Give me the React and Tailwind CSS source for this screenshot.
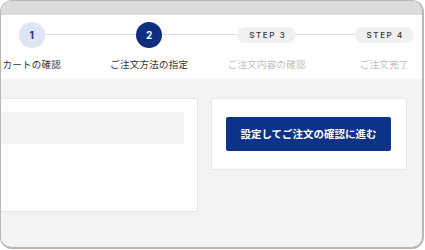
import React from "react"

const steps = [
  { key: 1, label: "カートの確認", state: "done" },
  { key: 2, label: "ご注文方法の指定", state: "current" },
  { key: 3, label: "ご注文内容の確認", state: "todo" },
  { key: 4, label: "ご注文完了", state: "todo" },
]

const jp = { fontFamily: '"Noto Sans CJK JP", "Noto Sans", sans-serif' }
const latin = { fontFamily: 'Inter, "Noto Sans", sans-serif' }

function StepMark({ step }) {
  if (step.state === "done") {
    return (
      <div className="relative z-10 w-[26px] h-[26px] rounded-full bg-[#dfe5f5] text-[#12307f] flex items-center justify-center text-[10px] font-bold" style={latin}>
        {step.key}
      </div>
    )
  }
  if (step.state === "current") {
    return (
      <div className="relative z-10 w-[26px] h-[26px] rounded-full bg-[#0f2e80] text-white flex items-center justify-center text-[10px] font-bold" style={latin}>
        {step.key}
      </div>
    )
  }
  return (
    <div className="relative z-10 h-[26px] flex items-center">
      <div className="h-[16px] w-[59px] rounded-full bg-[#f0f0f0] text-[#333] flex items-center justify-center text-[8px] font-medium tracking-[0.2em] pl-[2px]" style={latin}>
        STEP {step.key}
      </div>
    </div>
  )
}

function Step({ step, last }) {
  const muted = step.state === "todo"
  return (
    <div className="relative w-[117.5px] shrink-0 flex flex-col items-center pt-[7px]">
      {!last && <div className="absolute top-[19px] left-1/2 w-full h-px bg-[#dedede]" />}
      <StepMark step={step} />
      <div
        className={`mt-[10px] text-[9.5px] leading-[12px] tracking-[0.03em] whitespace-nowrap ${muted ? "text-[#bdbdbd]" : "text-[#333]"}`}
        style={jp}
      >
        {step.label}
      </div>
    </div>
  )
}

export default function App() {
  return (
    <div className="w-[425px] h-[250px] bg-white">
      <div className="w-[424px] h-[249px] rounded-[12px] border border-[#bdb6ae] border-b-2 border-r-2 overflow-hidden flex flex-col bg-[#f3f3f3]">
        <div className="h-[14px] bg-[#dcdcdc] shrink-0" />
        <div className="h-[64px] bg-white shrink-0 overflow-hidden">
          <div className="flex ml-[-28px]">
            {steps.map((s, i) => (
              <Step key={s.key} step={s} last={i === steps.length - 1} />
            ))}
          </div>
        </div>
        <div className="flex-1 flex items-start gap-[13px] pt-[19px] ml-[-20px]">
          <div className="w-[217px] h-[114px] shrink-0 bg-white border border-[#e5e5e5] pt-[13px] pr-[13px]">
            <div className="h-[32px] bg-[#f3f3f3]" />
          </div>
          <div className="w-[196px] shrink-0 bg-white border border-[#e8e8e8] px-[14px] py-[18px]">
            <button
              className="w-[165px] h-[34px] rounded-[2px] bg-[#0c3387] text-white text-[10.5px] font-bold flex items-center justify-center"
              style={jp}
            >
              設定してご注文の確認に進む
            </button>
          </div>
        </div>
      </div>
    </div>
  )
}
